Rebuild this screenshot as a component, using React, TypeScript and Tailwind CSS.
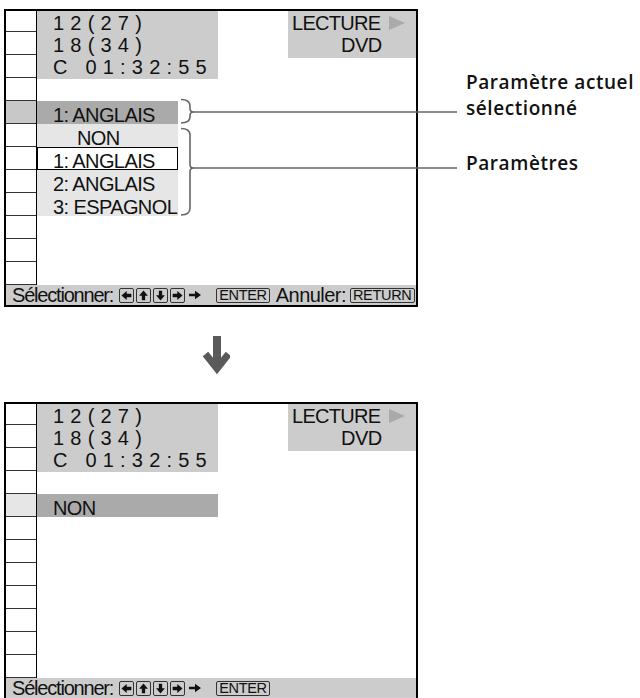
import React from "react";

function KeyArrow({ dir }: { dir: "left" | "up" | "down" | "right" }) {
  const rot =
    dir === "left" ? "rotate(180 5 5)" : dir === "up" ? "rotate(-90 5 5)" : dir === "down" ? "rotate(90 5 5)" : "";
  return (
    <div className="w-[15px] h-[15px] shrink-0 border border-[#333] rounded-[2px] flex items-center justify-center">
      <svg width="11" height="11" viewBox="0 0 10 10">
        <path d="M0.6 3.5H4.8V1L9.6 5L4.8 9V6.5H0.6Z" fill="#111" transform={rot} />
      </svg>
    </div>
  );
}

function TextKey({ label }: { label: string }) {
  return (
    <div className="h-[15px] shrink-0 border border-[#333] rounded-[2px] px-[2px] flex items-center text-[14.5px] leading-[15px] tracking-[-0.3px]">
      {label}
    </div>
  );
}

function StatusBar({ withCancel }: { withCancel: boolean }) {
  return (
    <div className="h-[20px] bg-[#cccccc] pl-[6px] flex items-center text-[20px] leading-[20px] text-[#111] whitespace-nowrap">
      <span className="tracking-[-1.2px]">Sélectionner:</span>
      <div className="ml-[6px] flex gap-[2px] shrink-0">
        <KeyArrow dir="left" />
        <KeyArrow dir="up" />
        <KeyArrow dir="down" />
        <KeyArrow dir="right" />
      </div>
      <svg className="ml-[4px] shrink-0" width="12" height="10" viewBox="0 0 12 10">
        <path d="M0 3.8H6V0.8L12 5L6 9.2V6.2H0Z" fill="#111" />
      </svg>
      <div className="ml-[15px] shrink-0">
        <TextKey label="ENTER" />
      </div>
      {withCancel && (
        <>
          <span className="ml-[6px] tracking-[-0.55px]">Annuler:</span>
          <div className="ml-[4px] shrink-0">
            <TextKey label="RETURN" />
          </div>
        </>
      )}
    </div>
  );
}

function InfoBlock() {
  return (
    <div className="h-[67px] flex">
      <div className="w-[181px] h-[68px] bg-[#cccccc] pl-[16px] pt-[1px] leading-[22px] tracking-[0.31em] whitespace-pre">
        <div>12(27)</div>
        <div>18(34)</div>
        <div>C 01:32:55</div>
      </div>
      <div className="flex-1" />
      <div className="w-[128px] h-[47px] bg-[#cccccc] pt-[1px] leading-[22px]">
        <div className="flex items-center pl-[4px]">
          <span className="tracking-[-0.7px]">LECTURE</span>
          <svg className="ml-[9px]" width="16" height="14" viewBox="0 0 16 14">
            <path d="M0 0L16 7L0 14Z" fill="#aaaaaa" />
          </svg>
        </div>
        <div className="pl-[53px] tracking-[-0.5px]">DVD</div>
      </div>
    </div>
  );
}

function Panel({
  leftHighlight,
  children,
  withCancel,
}: {
  leftHighlight: string;
  children: React.ReactNode;
  withCancel: boolean;
}) {
  const cells = Array.from({ length: 12 }, (_, i) => i);
  return (
    <div className="w-[414px] shrink-0 border-2 border-black flex flex-col bg-white">
      <div className="flex">
        <div className="w-[31px] border-r border-black flex flex-col">
          {cells.map((i) => (
            <div
              key={i}
              className={`${i === 0 ? "h-[21px]" : "h-[23px]"} border-b border-[#333] ${
                i === 4 ? leftHighlight : "bg-white"
              }`}
            />
          ))}
        </div>
        <div className="flex-1 flex flex-col text-[20px] text-[#111]">{children}</div>
      </div>
      <StatusBar withCancel={withCancel} />
    </div>
  );
}

export default function App() {
  return (
    <div className="relative w-[640px] h-[698px] overflow-hidden bg-white font-['Liberation_Sans',Arial,sans-serif]">
      <div className="pt-[9px] pl-[4px] flex flex-col">
        <div className="flex">
          <Panel leftHighlight="bg-[#c8c8c8]" withCancel={true}>
            <InfoBlock />
            <div className="h-[23px]" />
            <div className="h-[23px] w-[141px] bg-[#aaaaaa] pl-[16px] leading-[28px] tracking-[-0.6px]">1: ANGLAIS</div>
            <div className="w-[141px] bg-[#e6e6e6] flex flex-col tracking-[-0.6px]">
              <div className="h-[23px] pl-[40px] leading-[28px]">NON</div>
              <div className="h-[23px] pl-[15px] leading-[26px] bg-white border border-black">1: ANGLAIS</div>
              <div className="h-[23px] pl-[16px] leading-[28px]">2: ANGLAIS</div>
              <div className="h-[23px] pl-[16px] leading-[28px]">3: ESPAGNOL</div>
            </div>
          </Panel>
          <div className="ml-[48px] pt-[60px] flex flex-col font-['Open_Sans',sans-serif] font-semibold text-[19px] leading-[26px] tracking-[0.03em] text-[#111] whitespace-nowrap">
            <div>Paramètre actuel</div>
            <div>sélectionné</div>
            <div className="mt-[29px]">Paramètres</div>
          </div>
        </div>
        <div className="h-[95px]">
          <svg className="ml-[196px] mt-[29px]" width="30" height="40" viewBox="196 336 30 40">
            <path d="M213 336V368" stroke="#5a5a5a" strokeWidth="8" fill="none" />
            <path d="M201.5 354L213 368.5L224.5 354" stroke="#5a5a5a" strokeWidth="7" fill="none" strokeLinejoin="miter" />
          </svg>
        </div>
        <Panel leftHighlight="bg-[#e6e6e6]" withCancel={false}>
          <InfoBlock />
          <div className="h-[23px]" />
          <div className="h-[23px] w-[181px] bg-[#aaaaaa] pl-[16px] leading-[28px] tracking-[-0.6px]">NON</div>
        </Panel>
      </div>
      <svg className="absolute left-0 top-0 pointer-events-none" width="640" height="698" viewBox="0 0 640 698">
        <g stroke="#666" strokeWidth="1.6" fill="none">
          <path d="M181 99.5Q190 99.5 190 106V108.5Q190 112 193.5 112Q190 112 190 115.5V116.5Q190 123 181 123" />
          <path d="M193 112H457" />
          <path d="M181 128.5Q190 128.5 190 135V164.5Q190 168 193.5 168Q190 168 190 171.5V208Q190 215 181 215" />
          <path d="M193 168H457" />
        </g>
      </svg>
    </div>
  );
}
